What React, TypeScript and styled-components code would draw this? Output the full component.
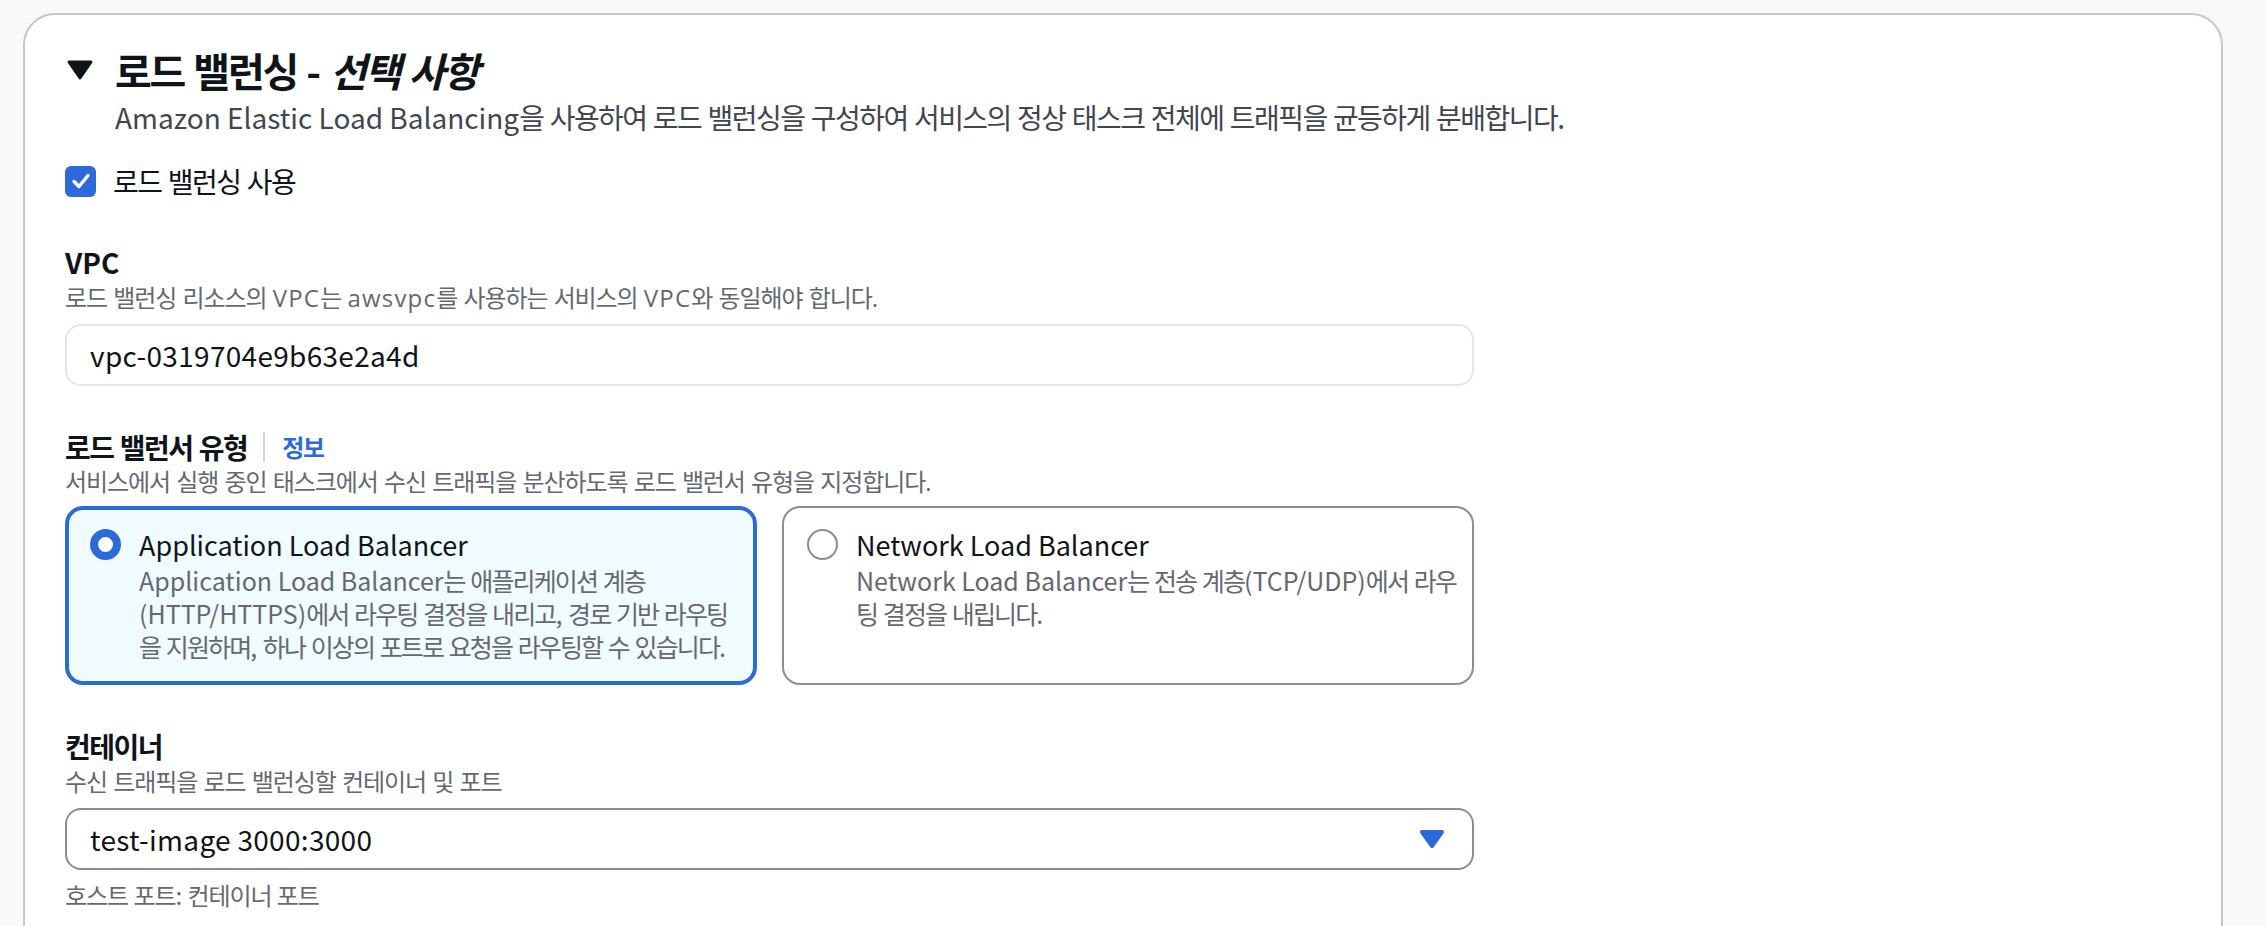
import React from "react";
import styled, { createGlobalStyle } from "styled-components";

const FONT = `"Noto Sans CJK KR", "Noto Sans", sans-serif`;
const BLUE = "#2b6ad8";

const GlobalStyle = createGlobalStyle`
  html, body {
    margin: 0;
    padding: 0;
    background: #f9f9fa;
  }
  body {
    font-family: ${FONT};
    color: #0f141a;
    -webkit-font-smoothing: antialiased;
  }
`;

/* Hangul runs are set a little tighter, like the narrower Korean face of the original */
const Hangul = styled.span`
  letter-spacing: var(--hangul-ls, -0.055em);
`;

const Latin = styled.span`
  letter-spacing: var(--latin-ls, 0);
`;

const SPLIT = /([\u1100-\u11FF\u3130-\u318F\uAC00-\uD7A3]+|[A-Za-z]+)/;
const IS_HANGUL = /^[\u1100-\u11FF\u3130-\u318F\uAC00-\uD7A3]+$/;
const IS_LATIN = /^[A-Za-z]+$/;

const T = ({ children }: { children: string }) => (
  <>
    {children.split(SPLIT).map((part, i) => {
      if (IS_HANGUL.test(part)) return <Hangul key={i}>{part}</Hangul>;
      if (IS_LATIN.test(part)) return <Latin key={i}>{part}</Latin>;
      return <React.Fragment key={i}>{part}</React.Fragment>;
    })}
  </>
);

const Page = styled.div`
  padding: 13px 43px 0 23px;
  height: 926px;
  box-sizing: border-box;
  overflow: hidden;
`;

const Card = styled.section`
  background: #ffffff;
  border: 2px solid #c6c6cd;
  border-radius: 32px;
  padding: 33px 40px 80px 40px;
  display: flex;
  flex-direction: column;
`;

const HeaderRow = styled.div`
  display: flex;
  align-items: center;
  height: 44px;
`;

const ExpandIcon = styled.svg`
  width: 28px;
  height: 22px;
  margin-left: 1px;
  margin-right: 21px;
  flex: none;
`;

const Title = styled.h2`
  margin: 0;
  font-size: 40px;
  line-height: 44px;
  font-weight: 700;
  color: #0f141a;
`;

const Optional = styled.em`
  font-style: italic;
`;

const HeaderDescription = styled.p`
  margin: 5px 0 0 50px;
  font-size: 28px;
  line-height: 40px;
  color: #424650;
`;

const CheckboxRow = styled.label`
  display: flex;
  align-items: center;
  gap: 17px;
  height: 40px;
  margin-top: 24px;
  font-size: 28px;
  color: #0f141a;
`;

const CheckBox = styled.span`
  width: 31px;
  height: 31px;
  border-radius: 6px;
  background: ${BLUE};
  display: inline-flex;
  align-items: center;
  justify-content: center;
  flex: none;
`;

const Field = styled.div<{ $top?: number }>`
  margin-top: ${(p) => p.$top ?? 41}px;
  display: flex;
  flex-direction: column;
`;

const LabelRow = styled.div<{ $height?: number }>`
  display: flex;
  align-items: center;
  height: ${(p) => p.$height ?? 40}px;
  line-height: ${(p) => p.$height ?? 40}px;
`;

const FieldLabel = styled.span`
  font-size: 28px;
  line-height: inherit;
  font-weight: 700;
  color: #0f141a;
`;

const Divider = styled.span`
  width: 2px;
  height: 30px;
  background: #d1d5db;
  margin: 0 17px 0 16px;
`;

const InfoLink = styled.a`
  font-size: 24px;
  font-weight: 700;
  color: ${BLUE};
  text-decoration: none;
`;

const FieldDescription = styled.div`
  --hangul-ls: -0.045em;
  --latin-ls: 0.05em;
  font-family: "Open Sans", "Noto Sans CJK KR", sans-serif;
  font-size: 24px;
  line-height: 32px;
  color: #656871;
`;

const Control = styled.div<{ $readOnly?: boolean }>`
  margin-top: 10px;
  width: 1409px;
  height: 62px;
  box-sizing: border-box;
  border: 2px solid ${(p) => (p.$readOnly ? "#e3e5e8" : "#8c8c94")};
  border-radius: 16px;
  background: #ffffff;
  display: flex;
  align-items: center;
  justify-content: space-between;
  padding: 0 24px 0 23px;
  font-size: 28px;
  letter-spacing: 0.3px;
  color: #0f141a;
`;

const Tiles = styled.div`
  margin-top: 8px;
  display: grid;
  grid-template-columns: 692px 692px;
  column-gap: 25px;
`;

const Tile = styled.div<{ $selected?: boolean }>`
  height: 179px;
  box-sizing: border-box;
  border: ${(p) => (p.$selected ? `4px solid ${BLUE}` : "2px solid #8c8c94")};
  background: ${(p) => (p.$selected ? "#f0fbff" : "#ffffff")};
  border-radius: 18px;
  padding: ${(p) => (p.$selected ? "15px 20px 0 21px" : "17px 22px 0 23px")};
  display: flex;
  gap: 18px;
`;

const Radio = styled.span<{ $checked?: boolean }>`
  flex: none;
  width: 31px;
  height: 31px;
  margin-top: 4px;
  box-sizing: border-box;
  border-radius: 50%;
  border: ${(p) => (p.$checked ? `8px solid ${BLUE}` : "2px solid #8c8c94")};
  background: #ffffff;
`;

const TileText = styled.div`
  display: flex;
  flex-direction: column;
`;

const TileTitle = styled.div`
  font-size: 27px;
  line-height: 39px;
  color: #0f141a;
`;

const TileDescription = styled.div`
  --hangul-ls: -0.075em;
  font-size: 25px;
  line-height: 33px;
  color: #656871;
  white-space: nowrap;
`;

const Constraint = styled.div`
  --hangul-ls: -0.045em;
  margin-top: 9px;
  font-size: 24px;
  line-height: 32px;
  color: #656871;
`;

const CaretDown = ({ size = 22, color = BLUE }: { size?: number; color?: string }) => (
  <svg width={size} height={size} viewBox="0 0 16 16">
    <path d="M3 4.5h10l-5 7z" fill={color} stroke={color} strokeWidth={2} strokeLinejoin="round" />
  </svg>
);

export default function App() {
  return (
    <>
      <GlobalStyle />
      <Page>
        <Card>
          <HeaderRow>
            <ExpandIcon viewBox="0 0 28 22">
              <path d="M3 3h22L14 19z" fill="#0f141a" stroke="#0f141a" strokeWidth={3} strokeLinejoin="round" />
            </ExpandIcon>
            <Title>
              <T>로드 밸런싱 - </T>
              <Optional>
                <T>선택 사항</T>
              </Optional>
            </Title>
          </HeaderRow>
          <HeaderDescription>
            <T>
              Amazon Elastic Load Balancing을 사용하여 로드 밸런싱을 구성하여 서비스의 정상 태스크 전체에 트래픽을 균등하게 분배합니다.
            </T>
          </HeaderDescription>

          <CheckboxRow>
            <CheckBox>
              <svg width="22" height="22" viewBox="0 0 22 22">
                <path d="M4 11.5l5 5 9-11" fill="none" stroke="#fff" strokeWidth={3.4} strokeLinecap="round" strokeLinejoin="round" />
              </svg>
            </CheckBox>
            <span>
              <T>로드 밸런싱 사용</T>
            </span>
          </CheckboxRow>

          <Field>
            <LabelRow>
              <FieldLabel>VPC</FieldLabel>
            </LabelRow>
            <FieldDescription>
              <T>로드 밸런싱 리소스의 VPC는 awsvpc를 사용하는 서비스의 VPC와 동일해야 합니다.</T>
            </FieldDescription>
            <Control $readOnly>vpc-0319704e9b63e2a4d</Control>
          </Field>

          <Field $top={42}>
            <LabelRow $height={38}>
              <FieldLabel>
                <T>로드 밸런서 유형</T>
              </FieldLabel>
              <Divider />
              <InfoLink href="#">
                <T>정보</T>
              </InfoLink>
            </LabelRow>
            <FieldDescription>
              <T>서비스에서 실행 중인 태스크에서 수신 트래픽을 분산하도록 로드 밸런서 유형을 지정합니다.</T>
            </FieldDescription>
            <Tiles>
              <Tile $selected>
                <Radio $checked />
                <TileText>
                  <TileTitle>Application Load Balancer</TileTitle>
                  <TileDescription>
                    <T>Application Load Balancer는 애플리케이션 계층</T>
                    <br />
                    <T>(HTTP/HTTPS)에서 라우팅 결정을 내리고, 경로 기반 라우팅</T>
                    <br />
                    <T>을 지원하며, 하나 이상의 포트로 요청을 라우팅할 수 있습니다.</T>
                  </TileDescription>
                </TileText>
              </Tile>
              <Tile>
                <Radio />
                <TileText>
                  <TileTitle>Network Load Balancer</TileTitle>
                  <TileDescription>
                    <T>Network Load Balancer는 전송 계층(TCP/UDP)에서 라우</T>
                    <br />
                    <T>팅 결정을 내립니다.</T>
                  </TileDescription>
                </TileText>
              </Tile>
            </Tiles>
          </Field>

          <Field>
            <LabelRow>
              <FieldLabel>
                <T>컨테이너</T>
              </FieldLabel>
            </LabelRow>
            <FieldDescription>
              <T>수신 트래픽을 로드 밸런싱할 컨테이너 및 포트</T>
            </FieldDescription>
            <Control>
              test-image 3000:3000
              <CaretDown size={32} />
            </Control>
            <Constraint>
              <T>호스트 포트: 컨테이너 포트</T>
            </Constraint>
          </Field>
        </Card>
      </Page>
    </>
  );
}
